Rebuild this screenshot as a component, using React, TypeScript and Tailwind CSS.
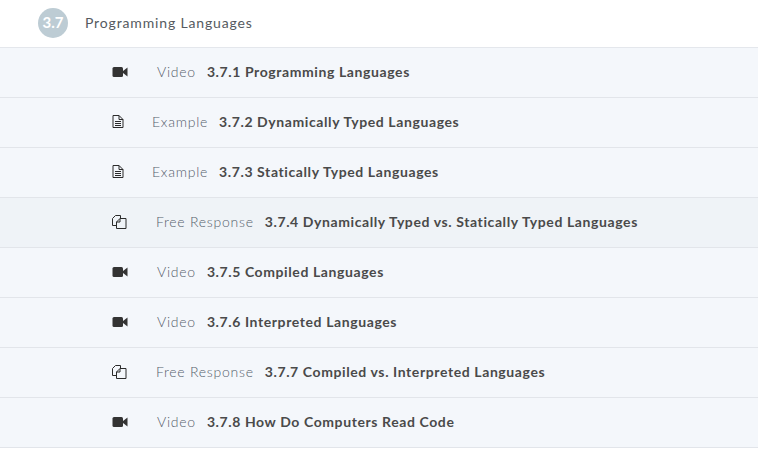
const font = { fontFamily: "Lato, sans-serif" };

type Kind = "video" | "example" | "free";

interface Row {
  kind: Kind;
  title: string;
  active?: boolean;
}

const rows: Row[] = [
  { kind: "video", title: "3.7.1 Programming Languages" },
  { kind: "example", title: "3.7.2 Dynamically Typed Languages" },
  { kind: "example", title: "3.7.3 Statically Typed Languages" },
  { kind: "free", title: "3.7.4 Dynamically Typed vs. Statically Typed Languages", active: true },
  { kind: "video", title: "3.7.5 Compiled Languages" },
  { kind: "video", title: "3.7.6 Interpreted Languages" },
  { kind: "free", title: "3.7.7 Compiled vs. Interpreted Languages" },
  { kind: "video", title: "3.7.8 How Do Computers Read Code" },
];

const labels: Record<Kind, string> = {
  video: "Video",
  example: "Example",
  free: "Free Response",
};

function KindIcon({ kind }: { kind: Kind }) {
  if (kind === "video") {
    return (
      <svg width="16" height="12" viewBox="0 0 16 12" className="mr-[29px] shrink-0">
        <rect x="0.5" y="1" width="10.5" height="10" rx="1.5" fill="#333" />
        <path d="M11 5 L15.5 1.4 V10.6 L11 7 Z" fill="#333" />
      </svg>
    );
  }
  if (kind === "example") {
    return (
      <svg width="12" height="13" viewBox="0 0 12 13" fill="none" stroke="#2b2b2b" strokeWidth="1" className="mr-[28px] shrink-0">
        <path d="M1 0.5 H7 L11 4.5 V12.5 H1 Z" />
        <path d="M7 0.5 V4.5 H11" />
        <path d="M3 6.5 H9 M3 8.5 H9 M3 10.5 H9" />
      </svg>
    );
  }
  return (
    <svg width="15" height="14" viewBox="0 0 15 14" fill="none" stroke="#2b2b2b" strokeWidth="1" className="mr-[29px] shrink-0">
      <path d="M4.5 10.5 H0.5 V3.5 L3.5 0.5 H8.5 V3.5" />
      <path d="M4.5 13.5 V7 L8 3.5 H14 V13.5 Z" />
      <path d="M4.5 7 H8 V3.5" />
    </svg>
  );
}

export default function App() {
  return (
    <div className="h-[452px] w-[758px] overflow-hidden bg-white" style={font}>
      {/* Section header */}
      <div className="flex h-[48px] items-center border-b border-[#e4e7ec] pb-[2px] pl-[38px]">
        <div className="flex h-[30px] w-[30px] items-center justify-center rounded-full bg-[#bdccd4] text-[15px] font-bold text-white">
          3.7
        </div>
        <span className="mb-px ml-[17px] text-[14px] tracking-[0.85px] text-[#555a60]">Programming Languages</span>
      </div>

      {/* Lessons */}
      {rows.map((row) => (
        <div
          key={row.title}
          className={`flex h-[50px] items-center border-b border-[#e2e5ea] pb-[2px] pl-[112px] text-[14px] ${
            row.active ? "bg-[#eff3f7]" : "bg-[#f4f7fb]"
          }`}
        >
          <KindIcon kind={row.kind} />
          <span className="mr-[11px] font-light tracking-[0.75px] text-[#55606b]">{labels[row.kind]}</span>
          <span className="font-bold tracking-[0.6px] text-[#4a4a4a]">{row.title}</span>
        </div>
      ))}
    </div>
  );
}
